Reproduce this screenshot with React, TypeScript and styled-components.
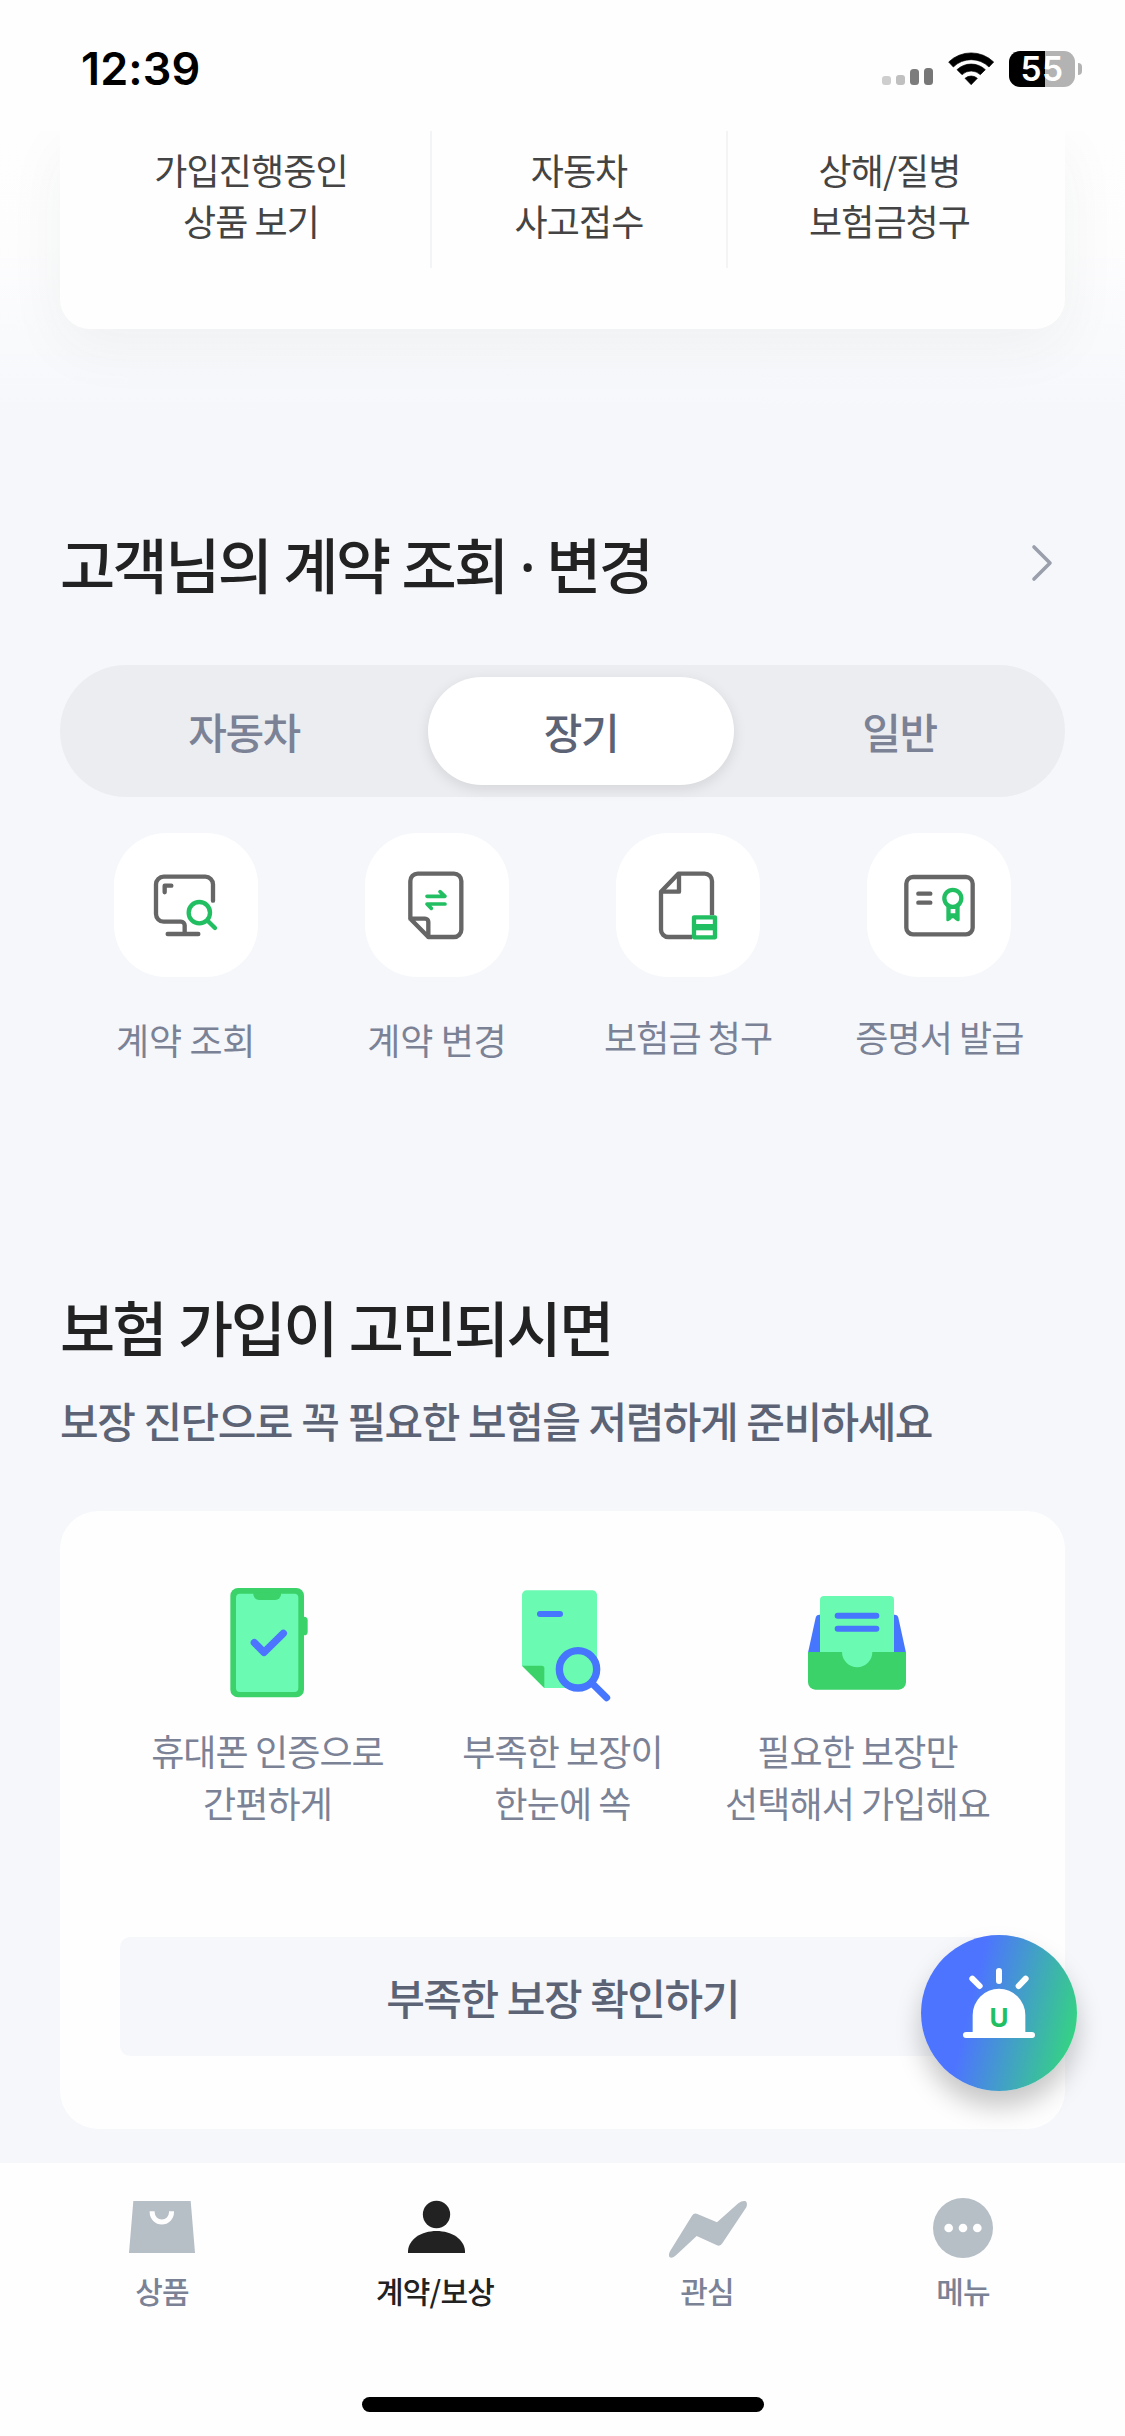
import React from "react";
import styled, { createGlobalStyle } from "styled-components";

const GlobalStyle = createGlobalStyle`
  *, *::before, *::after { box-sizing: border-box; }
  body {
    margin: 0;
    background: #fff;
    font-family: "Noto Sans CJK KR", "Noto Sans", sans-serif;
  }
  h2, p { margin: 0; }
  button { font: inherit; border: 0; padding: 0; background: none; }
  svg { display: block; overflow: visible; }
`;

const Screen = styled.div`
  width: 1125px;
  height: 2436px;
  display: flex;
  flex-direction: column;
  background: #f5f7fb;
  position: relative;
  overflow: hidden;
`;

/* ---------- Status bar ---------- */

const StatusBar = styled.header`
  height: 131px;
  flex: none;
  display: flex;
  align-items: flex-start;
  justify-content: space-between;
  padding: 51px 43px 0 81px;
  background: #fefefe;
`;

const Clock = styled.time`
  font-family: Inter, sans-serif;
  font-weight: 600;
  font-size: 45px;
  line-height: 36px;
  letter-spacing: 0.1px;
  color: #000;
`;

const StatusIcons = styled.div`
  display: flex;
  align-items: center;
  height: 36px;
`;

const Wifi = styled.svg`
  margin-left: 15px;
`;

const Battery = styled.div`
  width: 66px;
  height: 36px;
  margin-left: 15px;
  border-radius: 11px;
  background: linear-gradient(90deg, #000 0 36px, #b3b3b3 36px);
  color: #fff;
  font: 600 33.5px/36px Inter, sans-serif;
  letter-spacing: 0.4px;
  text-align: center;
`;

const BatteryNub = styled.div`
  width: 4px;
  height: 12px;
  margin-left: 3px;
  border-radius: 0 6px 6px 0;
  background: #b3b3b3;
`;

/* ---------- Quick menu ---------- */

const QuickArea = styled.section`
  height: 284px;
  flex: none;
  padding: 0 60px;
  overflow: hidden;
  background: linear-gradient(#fefefe 0, #fdfdfe 110px, #f9fafc 210px, #f5f7fb 284px);
`;

const QuickCard = styled.div`
  height: 198px;
  display: grid;
  grid-template-columns: 360px 296px 323px;
  padding: 0 12px;
  background: #fefefe;
  border-radius: 0 0 30px 30px;
  box-shadow: 0 18px 60px rgba(30, 60, 45, 0.05);
`;

const QuickItem = styled.div<{ $divided?: boolean }>`
  height: 137px;
  padding-top: 13px;
  border-right: ${(p) => (p.$divided ? "2px solid #f3f4f5" : "0")};
  font-size: 36px;
  line-height: 51px;
  letter-spacing: -0.9px;
  color: #444;
  text-align: center;
  white-space: pre-line;
`;

/* ---------- Contract section ---------- */

const Contract = styled.section`
  height: 850px;
  flex: none;
  padding: 104px 60px 0;
`;

const TitleRow = styled.div`
  display: flex;
  align-items: center;
  justify-content: space-between;
  height: 90px;
  padding-right: 13px;
`;

const Title = styled.h2`
  font-weight: 500;
  font-size: 60px;
  line-height: 90px;
  letter-spacing: -2.6px;
  word-spacing: 2px;
  color: #222;
  white-space: nowrap;
`;

const Dot = styled.span`
  font-family: "Noto Sans", sans-serif;
`;

const Tabs = styled.div`
  display: grid;
  grid-template-columns: 368px 306px 331px;
  height: 132px;
  margin-top: 56px;
  padding: 12px 0;
  border-radius: 66px;
  background: #ecedf1;
`;

const Tab = styled.button<{ $active?: boolean }>`
  border-radius: 54px;
  font-weight: 500;
  font-size: 42px;
  line-height: 108px;
  letter-spacing: -1.5px;
  color: ${(p) => (p.$active ? "#5c6375" : "#7b8296")};
  background: ${(p) => (p.$active ? "#fff" : "transparent")};
  box-shadow: ${(p) => (p.$active ? "0 4px 14px rgba(0,0,0,0.1)" : "none")};
`;

const Shortcuts = styled.div`
  display: grid;
  grid-template-columns: repeat(4, 1fr);
  margin-top: 36px;
`;

const Shortcut = styled.div`
  display: flex;
  flex-direction: column;
  align-items: center;
`;

const Tile = styled.div`
  width: 144px;
  height: 144px;
  border-radius: 52px;
  background: #fff;
`;

const ShortcutLabel = styled.span<{ $gap: number; $tracking: number }>`
  margin-top: ${(p) => p.$gap}px;
  font-size: 36px;
  line-height: 52px;
  letter-spacing: ${(p) => p.$tracking}px;
  color: #7b8296;
  white-space: nowrap;
`;

/* ---------- Diagnosis section ---------- */

const Diagnosis = styled.section`
  height: 898px;
  flex: none;
  padding: 16px 60px 0;
`;

const Subtitle = styled.p`
  margin-top: 19px;
  font-weight: 500;
  font-size: 42px;
  line-height: 60px;
  letter-spacing: -1.5px;
  word-spacing: 1.2px;
  color: #5c6375;
  white-space: nowrap;
`;

const BenefitCard = styled.div`
  height: 618px;
  margin-top: 61px;
  padding: 72px 60px 0;
  border-radius: 38px;
  background: #fefefe;
`;

const Benefits = styled.div`
  display: grid;
  grid-template-columns: repeat(3, 1fr);
`;

const Benefit = styled.div`
  display: flex;
  flex-direction: column;
  align-items: center;
`;

const BenefitArt = styled.svg`
  width: 120px;
  height: 120px;
  margin-right: 1px;
`;

const BenefitText = styled.p`
  margin-top: 22px;
  font-size: 36px;
  line-height: 51.5px;
  letter-spacing: -0.9px;
  color: #7b8296;
  text-align: center;
  white-space: pre;
`;

const CheckButton = styled.button`
  display: block;
  width: 100%;
  height: 119px;
  margin-top: 109px;
  border-radius: 10px;
  background: #f5f7fb;
  font-weight: 500;
  font-size: 42px;
  line-height: 119px;
  letter-spacing: -1.5px;
  word-spacing: 1.2px;
  color: #5c6375;
`;

/* ---------- Bottom ---------- */

const BottomNav = styled.nav`
  flex: 1;
  display: flex;
  flex-direction: column;
  align-items: center;
  background: #fefefe;
`;

const NavItems = styled.div`
  display: grid;
  grid-template-columns: 274px 272px 272px 240px;
  width: 100%;
  height: 234px;
  padding: 35px 0 0 25px;
`;

const NavItem = styled.div<{ $active?: boolean }>`
  display: flex;
  flex-direction: column;
  align-items: center;
  gap: 12px;
  font-weight: 500;
  font-size: 30px;
  line-height: 40px;
  letter-spacing: -0.8px;
  color: ${(p) => (p.$active ? "#222" : "#7b8296")};
`;

const HomeIndicator = styled.div`
  width: 402px;
  height: 15px;
  border-radius: 8px;
  background: #000;
`;

const FloatingButton = styled.button`
  position: absolute;
  left: 921px;
  top: 1935px;
  width: 156px;
  height: 156px;
  border-radius: 50%;
  background: linear-gradient(104deg, #4d74ff 34%, #35d383 92%);
  box-shadow: 0 16px 26px rgba(0, 0, 0, 0.22);
`;

/* ---------- Icons ---------- */

const SignalIcon = () => (
  <svg width="51" height="36" viewBox="882 51 51 36">
    <rect x="882" y="76" width="9" height="9" rx="3" fill="#cecece" />
    <rect x="896" y="75" width="9" height="10" rx="3" fill="#c0c0c0" />
    <rect x="910" y="69" width="9" height="16" rx="3.5" fill="#7c7c7c" />
    <rect x="924" y="68" width="9" height="17" rx="3.5" fill="#777" />
  </svg>
);

const WifiIcon = () => (
  <Wifi width="46" height="36" viewBox="264 63 138 108" stroke="#000" strokeWidth="2" strokeLinejoin="round">
    <path d="M266 96 A97 97 0 0 1 401 96 L387 111 A76 76 0 0 0 280 111Z" />
    <path d="M291 119 A62 62 0 0 1 376 119 L361 134 A40 40 0 0 0 306 134Z" />
    <path d="M315 145 A28 28 0 0 1 352 145 L333.500 164Z" />
  </Wifi>
);

const ChevronIcon = () => (
  <svg width="20" height="36" viewBox="0 0 20 36" fill="none" stroke="#9a9fab" strokeWidth="3.6" strokeLinecap="round" strokeLinejoin="round">
    <path d="M2 1 L18 17 L2 33" />
  </svg>
);

const INK = "#666";
const GREEN = "#22bf62";

const TileSvg = ({ box, children }: { box: string; children: React.ReactNode }) => (
  <svg width="144" height="144" viewBox={box} fill="none" stroke={INK} strokeWidth="13" strokeLinecap="round" strokeLinejoin="round">
    {children}
  </svg>
);

const SearchContractIcon = () => (
  <TileSvg box="42 38 432 432">
    <path d="M339 241 V192 a23 23 0 0 0 -23 -23 H191 a23 23 0 0 0 -23 23 V281 a23 23 0 0 0 23 23 H243 a11 11 0 0 1 11 11 V340 M203 341 H295" />
    <path d="M194 216 V196 H214" />
    <circle cx="298" cy="277" r="32" stroke={GREEN} />
    <path d="M323 301 L345 323" stroke={GREEN} />
  </TileSvg>
);

const ChangeContractIcon = () => (
  <TileSvg box="794 38 432 432">
    <path d="M930 295 V182 a22 22 0 0 1 22 -22 H1061 a22 22 0 0 1 22 22 V328 a22 22 0 0 1 -22 22 H984 L930 295 H974 a10 10 0 0 1 10 10 V350" />
    <path d="M980 228 H1034 L1019 214 M1034 251 H980 L993 264" stroke={GREEN} strokeWidth="11" />
  </TileSvg>
);

const ClaimIcon = () => (
  <TileSvg box="138 38 432 432">
    <path d="M366 350 H295 a22 22 0 0 1 -22 -22 V214 L325 160 H404 a22 22 0 0 1 22 22 V285" strokeLinecap="butt" />
    <path d="M275 214 H327 V162" />
    <rect x="372" y="291" width="63" height="60" stroke={GREEN} />
    <path d="M372 320.500 H435" stroke={GREEN} strokeWidth="19" strokeLinecap="butt" />
  </TileSvg>
);

const CertificateIcon = () => (
  <TileSvg box="890 38 432 432">
    <rect x="1008" y="170" width="199" height="172" rx="20" />
    <path d="M1044 220 H1080 M1044 247 H1080" />
    <circle cx="1147.500" cy="234" r="25.500" stroke={GREEN} />
    <path
      d="M1128 254 H1168 V300 Q1166 305 1160 302 L1154 298 Q1151 294 1147.500 294 Q1144 294 1141 298 L1135 302 Q1129 305 1128 300Z M1141 265 V279 H1155 V265Z"
      fill={GREEN}
      fillRule="evenodd"
      stroke="none"
    />
  </TileSvg>
);

const MINT = "#6bfab1";
const LEAF = "#3bd269";
const BLUE = "#4576fd";

const BenefitSvg = ({ box, children }: { box: string; children: React.ReactNode }) => (
  <BenefitArt viewBox={box} fill="none" strokeLinecap="round" strokeLinejoin="round">
    {children}
  </BenefitArt>
);

const PhoneIcon = () => (
  <BenefitSvg box="231 69 360 360">
    <rect x="500" y="170" width="33" height="56" rx="11" fill={LEAF} />
    <rect x="301" y="84" width="221" height="328" rx="23" fill={LEAF} />
    <rect x="318" y="101" width="187" height="295" rx="12" fill={MINT} />
    <path d="M370 98 H453 V103 a17 17 0 0 1 -17 17 H387 a17 17 0 0 1 -17 -17Z" fill={LEAF} />
    <path d="M373 248 L402 277 L460 220" stroke="#4d74ff" strokeWidth="22" />
  </BenefitSvg>
);

const DocumentSearchIcon = () => (
  <BenefitSvg box="1116 69 360 360">
    <path d="M1176 317 V105 a14 14 0 0 1 14 -14 H1387 a14 14 0 0 1 14 14 V328 L1344 384 H1243Z" fill={MINT} />
    <path d="M1176 317 H1235 a8 8 0 0 1 8 8 V384Z" fill={LEAF} />
    <path d="M1230 162 H1290" stroke={BLUE} strokeWidth="18" />
    <circle cx="1344" cy="328" r="56" fill={MINT} stroke={BLUE} strokeWidth="22" />
    <path d="M1386 370 L1430 413" stroke={BLUE} strokeWidth="21" />
  </BenefitSvg>
);

const TrayIcon = () => (
  <BenefitSvg box="681 69 360 360">
    <path d="M714 278 L737 173 Q739 164 748 164 H974 Q983 164 985 173 L1008 278Z" fill={BLUE} />
    <rect x="750" y="108" width="222" height="230" rx="12" fill={MINT} />
    <path d="M714 276 H816 a45.500 45.500 0 0 0 91 0 H1008 V367 a22 22 0 0 1 -22 22 H736 a22 22 0 0 1 -22 -22Z" fill={LEAF} />
    <path d="M803 167.500 H919 M803 206.500 H919" stroke={BLUE} strokeWidth="18" />
  </BenefitSvg>
);

const SirenIcon = () => (
  <svg width="156" height="156" viewBox="93 75 468 468" fill="none" stroke="#fff" strokeWidth="18" strokeLinecap="round">
    <path d="M248 380 V315 a79 79 0 0 1 158 0 V380Z" fill="#fff" stroke="none" />
    <path d="M228 375 H426 M327 183 V213 M247 206 L269 228 M407 206 L386 228" />
    <text x="327" y="350" textAnchor="middle" fill={GREEN} stroke="none" fontFamily="Inter, sans-serif" fontWeight="700" fontSize="78">
      U
    </text>
  </svg>
);

const MUTED = "#b6bec6";

const NavSvg = ({ box, children }: { box: string; children: React.ReactNode }) => (
  <svg width="84" height="60" viewBox={box} fill={MUTED}>
    {children}
  </svg>
);

const BagIcon = () => (
  <NavSvg box="60 54 252 180">
    <path d="M100 63 H272 L285 219 H87Z" />
    <path d="M156.500 94 V97 a29 29 0 0 0 58 0 V94" fill="none" stroke="#fefefe" strokeWidth="15" />
  </NavSvg>
);

const PersonIcon = () => (
  <NavSvg box="879 54 252 180">
    <circle cx="1009.500" cy="103.500" r="41" fill="#222" />
    <path d="M924 219 V213 C926 178 964 153 1009.500 153 S1093 178 1095 213 V219Z" fill="#222" />
  </NavSvg>
);

const TrendIcon = () => (
  <NavSvg box="135 54 252 180">
    <path d="M150 214 L216 107 Q222 98 232 102 L291 127 L355 70 Q366 61 376 63 Q384 68 379 82 L307 190 Q301 200 291 196 L230 168 L168 226 Q158 236 149 232 Q144 226 150 214Z" />
  </NavSvg>
);

const MenuIcon = () => (
  <NavSvg box="903 54 252 180">
    <circle cx="1029" cy="144" r="90" />
    <circle cx="986" cy="144" r="13" fill="#fefefe" />
    <circle cx="1029" cy="144" r="13" fill="#fefefe" />
    <circle cx="1072" cy="144" r="13" fill="#fefefe" />
  </NavSvg>
);

/* ---------- Data ---------- */

const quickItems = ["가입진행중인\n상품 보기", "자동차\n사고접수", "상해/질병\n보험금청구"];

const shortcuts = [
  { label: "계약 조회", gap: 36, tracking: -0.3, Icon: SearchContractIcon },
  { label: "계약 변경", gap: 36, tracking: -0.3, Icon: ChangeContractIcon },
  { label: "보험금 청구", gap: 33, tracking: -0.9, Icon: ClaimIcon },
  { label: "증명서 발급", gap: 33, tracking: -0.9, Icon: CertificateIcon },
];

const benefits = [
  { text: "휴대폰 인증으로\n간편하게", Icon: PhoneIcon },
  { text: "부족한 보장이\n한눈에 쏙", Icon: DocumentSearchIcon },
  { text: "필요한 보장만\n선택해서 가입해요", Icon: TrayIcon },
];

const navItems = [
  { label: "상품", Icon: BagIcon },
  { label: "계약/보상", Icon: PersonIcon, active: true },
  { label: "관심", Icon: TrendIcon },
  { label: "메뉴", Icon: MenuIcon },
];

export default function App() {
  return (
    <>
      <GlobalStyle />
      <Screen>
        <StatusBar>
          <Clock>12:39</Clock>
          <StatusIcons>
            <SignalIcon />
            <WifiIcon />
            <Battery>55</Battery>
            <BatteryNub />
          </StatusIcons>
        </StatusBar>

        <QuickArea>
          <QuickCard>
            {quickItems.map((text, i) => (
              <QuickItem key={text} $divided={i < 2}>
                {text}
              </QuickItem>
            ))}
          </QuickCard>
        </QuickArea>

        <Contract>
          <TitleRow>
            <Title>
              고객님의 계약 조회 <Dot>·</Dot> 변경
            </Title>
            <ChevronIcon />
          </TitleRow>
          <Tabs>
            <Tab>자동차</Tab>
            <Tab $active>장기</Tab>
            <Tab>일반</Tab>
          </Tabs>
          <Shortcuts>
            {shortcuts.map(({ label, gap, tracking, Icon }) => (
              <Shortcut key={label}>
                <Tile>
                  <Icon />
                </Tile>
                <ShortcutLabel $gap={gap} $tracking={tracking}>
                  {label}
                </ShortcutLabel>
              </Shortcut>
            ))}
          </Shortcuts>
        </Contract>

        <Diagnosis>
          <Title>보험 가입이 고민되시면</Title>
          <Subtitle>보장 진단으로 꼭 필요한 보험을 저렴하게 준비하세요</Subtitle>
          <BenefitCard>
            <Benefits>
              {benefits.map(({ text, Icon }) => (
                <Benefit key={text}>
                  <Icon />
                  <BenefitText>{text}</BenefitText>
                </Benefit>
              ))}
            </Benefits>
            <CheckButton>부족한 보장 확인하기</CheckButton>
          </BenefitCard>
        </Diagnosis>

        <BottomNav>
          <NavItems>
            {navItems.map(({ label, Icon, active }) => (
              <NavItem key={label} $active={active}>
                <Icon />
                {label}
              </NavItem>
            ))}
          </NavItems>
          <HomeIndicator />
        </BottomNav>

        <FloatingButton>
          <SirenIcon />
        </FloatingButton>
      </Screen>
    </>
  );
}
